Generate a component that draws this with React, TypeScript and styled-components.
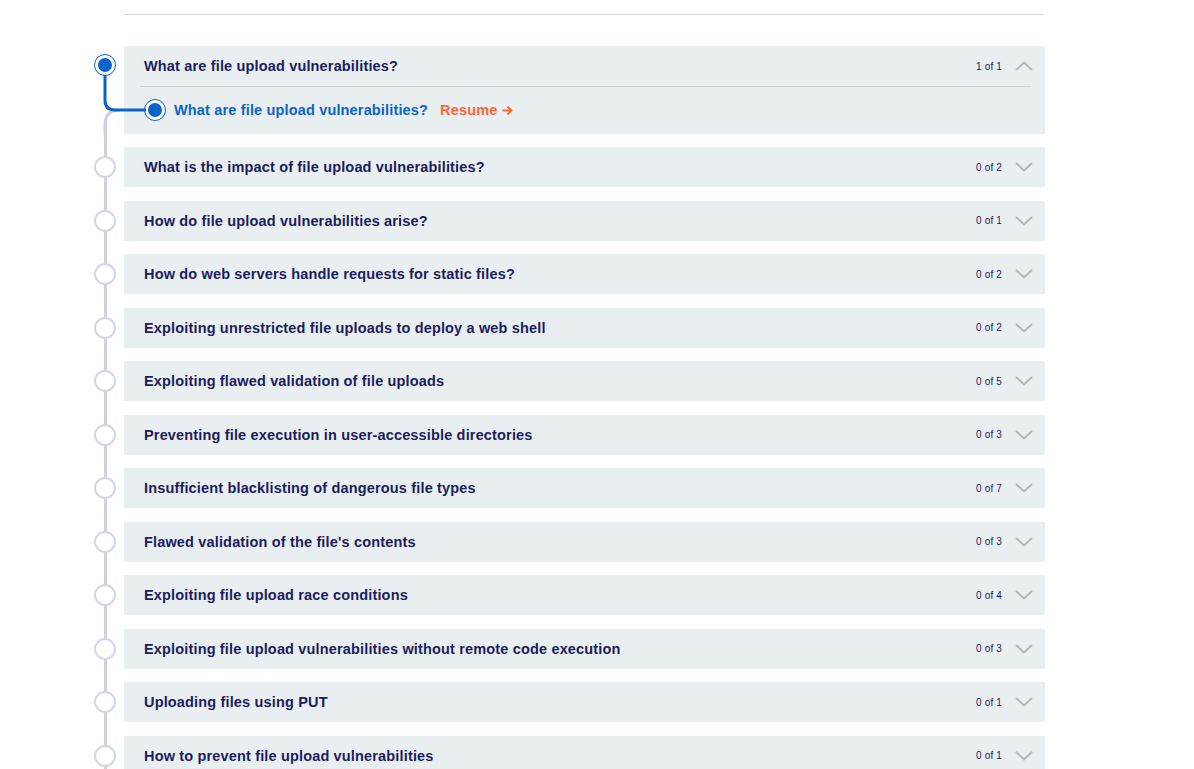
import React from 'react';
import styled, { createGlobalStyle } from 'styled-components';

const GlobalStyle = createGlobalStyle`
  html, body {
    margin: 0;
    padding: 0;
    background: #ffffff;
  }
  body {
    font-family: "Liberation Sans", Arial, sans-serif;
    overflow: hidden;
  }
`;

interface Topic {
  title: string;
  done: number;
  total: number;
}

const topics: Topic[] = [
  { title: 'What is the impact of file upload vulnerabilities?', done: 0, total: 2 },
  { title: 'How do file upload vulnerabilities arise?', done: 0, total: 1 },
  { title: 'How do web servers handle requests for static files?', done: 0, total: 2 },
  { title: 'Exploiting unrestricted file uploads to deploy a web shell', done: 0, total: 2 },
  { title: 'Exploiting flawed validation of file uploads', done: 0, total: 5 },
  { title: 'Preventing file execution in user-accessible directories', done: 0, total: 3 },
  { title: 'Insufficient blacklisting of dangerous file types', done: 0, total: 7 },
  { title: "Flawed validation of the file's contents", done: 0, total: 3 },
  { title: 'Exploiting file upload race conditions', done: 0, total: 4 },
  { title: 'Exploiting file upload vulnerabilities without remote code execution', done: 0, total: 3 },
  { title: 'Uploading files using PUT', done: 0, total: 1 },
  { title: 'How to prevent file upload vulnerabilities', done: 0, total: 1 },
];

const Page = styled.div`
  padding-top: 14px;
`;

const TopRule = styled.div`
  margin-left: 123px;
  width: 921px;
  height: 1px;
  background: #d5d9dc;
`;

const List = styled.div`
  position: relative;
  margin-top: 31px;
  margin-left: 84px;
  width: 962px;

  &::before {
    content: '';
    position: absolute;
    left: 20px;
    top: 76px;
    bottom: 0;
    width: 3px;
    background: #d0d0df;
  }
`;

const Row = styled.div`
  position: relative;
  display: grid;
  grid-template-columns: 40px 921px;
  margin-bottom: 13.5px;
`;

const MarkerCell = styled.div<{ $top?: boolean }>`
  display: flex;
  justify-content: flex-start;
  align-items: ${(p) => (p.$top ? 'flex-start' : 'center')};
  padding-left: 10px;
  padding-top: ${(p) => (p.$top ? '8px' : '0')};
  z-index: 1;
`;

const Dot = styled.div<{ $active?: boolean }>`
  box-sizing: border-box;
  width: 22px;
  height: 22px;
  border-radius: 50%;
  background: #ffffff;
  border: ${(p) => (p.$active ? '1.5px solid #0b63cc' : '2px solid #d5d5e3')};
  display: flex;
  align-items: center;
  justify-content: center;
  flex-shrink: 0;

  &::after {
    content: '';
    display: ${(p) => (p.$active ? 'block' : 'none')};
    width: 14px;
    height: 14px;
    border-radius: 50%;
    background: #0b63cc;
  }
`;

const Card = styled.div`
  background: #e9eef1;
`;

const Header = styled.div`
  display: flex;
  align-items: center;
  height: 40px;
  padding: 0 12px 0 20px;
`;

const Title = styled.span`
  flex: 1;
  font-size: 14.5px;
  font-weight: 700;
  color: #1b1d5c;
  letter-spacing: 0.16px;
  white-space: nowrap;
`;

const Count = styled.span`
  font-size: 10px;
  color: #1b1d5c;
  letter-spacing: 0.15px;
  margin-right: 13px;
`;

const Divider = styled.div`
  height: 1px;
  margin: 0 14px 0 16px;
  background: #cdd2d6;
`;

const SubRow = styled.div`
  display: flex;
  align-items: center;
  height: 46.5px;
  padding-left: 20px;
  gap: 8px;
`;

const SubTitle = styled.span`
  font-size: 14.5px;
  font-weight: 700;
  color: #0b63c8;
  letter-spacing: 0.16px;
`;

const Resume = styled.span`
  margin-left: 4px;
  font-size: 14.5px;
  font-weight: 700;
  color: #ff6633;
  letter-spacing: 0.16px;
  display: inline-flex;
  align-items: center;
  gap: 5px;
`;

const Connector = styled.svg`
  position: absolute;
  left: 0;
  top: 0;
  z-index: 0;
`;

const Chevron = ({ up }: { up?: boolean }) => (
  <svg width="18" height="10" viewBox="0 0 18 10">
    <path
      d={up ? 'M1 9 L9 1.5 L17 9' : 'M1 1 L9 8.5 L17 1'}
      fill="none"
      stroke="#b4b6b8"
      strokeWidth="2"
    />
  </svg>
);

const Arrow = () => (
  <svg width="11" height="11" viewBox="0 0 11 11">
    <path d="M0.5 5.5 H9.5 M5.5 1.5 L9.5 5.5 L5.5 9.5" fill="none" stroke="#ff6633" strokeWidth="1.8" />
  </svg>
);

const App: React.FC = () => {
  return (
    <Page>
      <GlobalStyle />
      <TopRule />
      <List>
        <Row>
          <Connector width="64" height="88" viewBox="0 0 64 88">
            <path d="M36 64 Q21 64 21 79 V88" fill="none" stroke="#d0d0df" strokeWidth="3" />
            <path d="M21 28 V54 Q21 64 31 64 H62" fill="none" stroke="#0b63cc" strokeWidth="3" />
          </Connector>
          <MarkerCell $top>
            <Dot $active />
          </MarkerCell>
          <Card>
            <Header>
              <Title>What are file upload vulnerabilities?</Title>
              <Count>1 of 1</Count>
              <Chevron up />
            </Header>
            <Divider />
            <SubRow>
              <Dot $active />
              <SubTitle>What are file upload vulnerabilities?</SubTitle>
              <Resume>
                Resume <Arrow />
              </Resume>
            </SubRow>
          </Card>
        </Row>
        {topics.map((t) => (
          <Row key={t.title}>
            <MarkerCell>
              <Dot />
            </MarkerCell>
            <Card>
              <Header>
                <Title>{t.title}</Title>
                <Count>
                  {t.done} of {t.total}
                </Count>
                <Chevron />
              </Header>
            </Card>
          </Row>
        ))}
      </List>
    </Page>
  );
};

export default App;
